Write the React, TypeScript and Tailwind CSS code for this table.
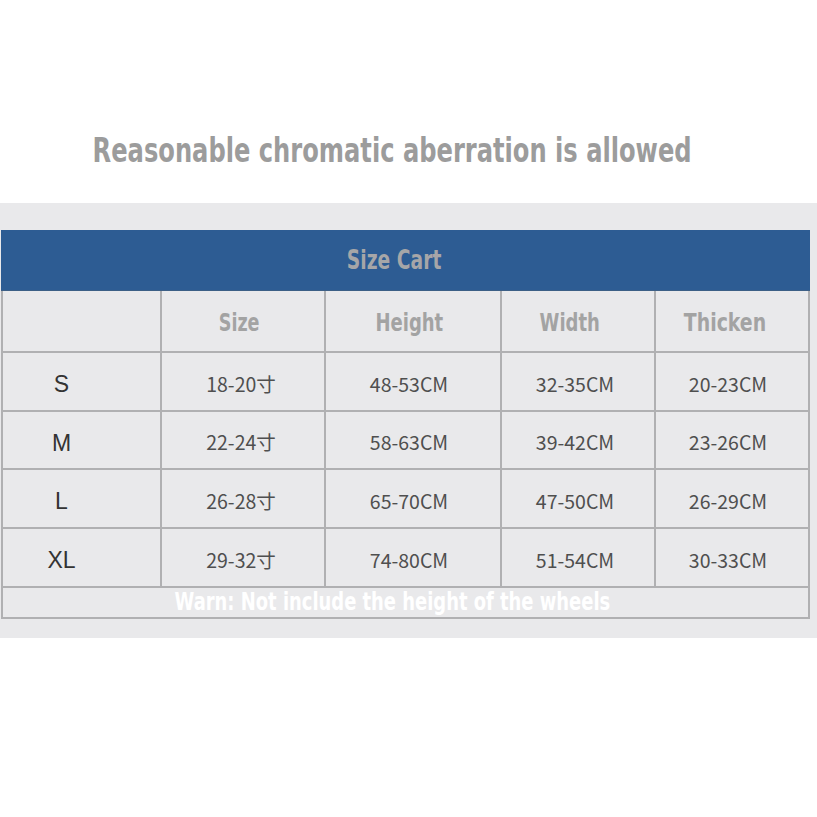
import React from "react";

const heavy = "font-['DejaVu_Sans_Condensed',sans-serif] font-bold";

const rows = [
  { s: "S", size: "18-20寸", h: "48-53CM", w: "32-35CM", t: "20-23CM", rh: "h-[57px]" },
  { s: "M", size: "22-24寸", h: "58-63CM", w: "39-42CM", t: "23-26CM", rh: "h-[56px]" },
  { s: "L", size: "26-28寸", h: "65-70CM", w: "47-50CM", t: "26-29CM", rh: "h-[57px]" },
  { s: "XL", size: "29-32寸", h: "74-80CM", w: "51-54CM", t: "30-33CM", rh: "h-[57px]" },
];

const heads = [
  { c: "Size", sc: "scale-x-[0.78]", pad: "pr-[8px]" },
  { c: "Height", sc: "scale-x-[0.8]", pad: "pr-[8px]" },
  { c: "Width", sc: "scale-x-[0.8]", pad: "pr-[16px]" },
  { c: "Thicken", sc: "scale-x-[0.84]", pad: "pr-[14px]" },
];

function Squeeze({ children, className }: { children: React.ReactNode; className: string }) {
  return <span className={`inline-block origin-center whitespace-nowrap ${heavy} ${className}`}>{children}</span>;
}

export default function App() {
  return (
    <div className="h-[817px] w-[817px] overflow-hidden bg-white">
      {/* titre */}
      <div className="flex h-[203px] justify-center pt-[128px] pr-[33px]">
        <Squeeze className="scale-x-[0.79] text-[34px] leading-[44px] text-[#9c9c9c]">Reasonable chromatic aberration is allowed</Squeeze>
      </div>

      {/* panneau gris */}
      <div className="h-[435px] bg-[#e9e9eb] pt-[27px] pl-[1px]">
        <div className="flex h-[61px] w-[809px] items-center justify-center border-b border-[#3c5f86] bg-[#2d5c93] pr-[22px]">
          <Squeeze className="scale-x-[0.8] text-[26px] text-[#a6a6a8]">Size Cart</Squeeze>
        </div>

        <div className="grid w-[809px] grid-cols-[157px_162px_174px_152px_152px] gap-[2px] bg-[#b0b0b2] px-[2px] pb-[2px]">
          <div className="h-[60px] bg-[#e9e9eb]" />
          {heads.map((h) => (
            <div key={h.c} className={`flex h-[60px] items-center justify-center bg-[#e9e9eb] pt-[4px] ${h.pad}`}>
              <Squeeze className={`${h.sc} text-[25px] text-[#a3a3a3]`}>{h.c}</Squeeze>
            </div>
          ))}

          {rows.map((r) => (
            <React.Fragment key={r.s}>
              <div className={`flex ${r.rh} items-center justify-center bg-[#e9e9eb] pr-[40px] pt-[6px] font-['Liberation_Sans',sans-serif] text-[23px] text-[#333]`}>
                {r.s}
              </div>
              {[r.size, r.h, r.w, r.t].map((v, i) => (
                <div
                  key={i}
                  className={`flex ${r.rh} items-center justify-center bg-[#e9e9eb] pt-[4px] font-['Noto_Sans_CJK_SC',sans-serif] text-[19.5px] text-[#4f4f4f] ${i === 0 ? "pr-[4px]" : i === 2 ? "pr-[6px]" : "pr-[8px]"}`}
                >
                  {v}
                </div>
              ))}
            </React.Fragment>
          ))}

          <div className="col-span-5 flex h-[29px] items-center justify-center bg-[#e9e9eb] pr-[26px]">
            <Squeeze className="scale-x-[0.83] text-[24px] leading-[29px] text-white">Warn: Not include the height of the wheels</Squeeze>
          </div>
        </div>
      </div>
    </div>
  );
}
